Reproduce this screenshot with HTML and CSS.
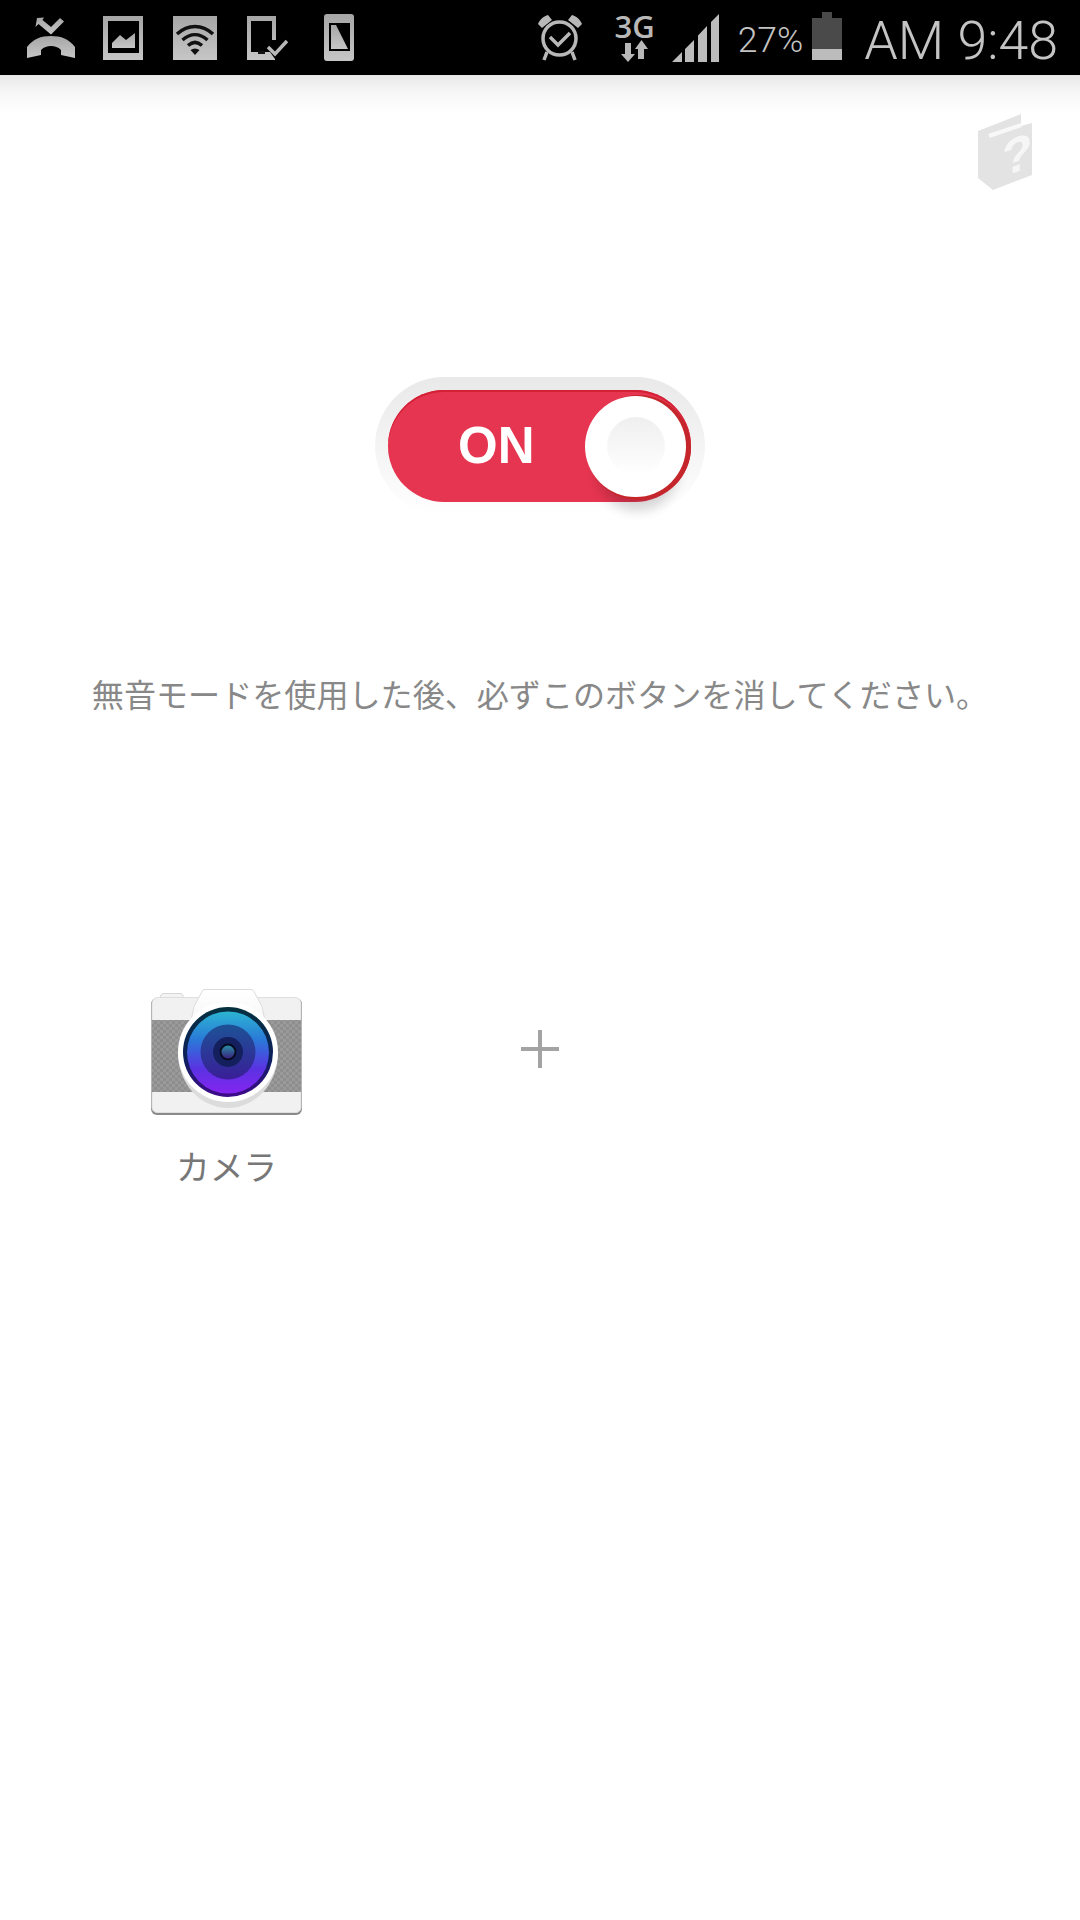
FILE: index.html
```html
<!DOCTYPE html>
<html lang="ja">
<head>
<meta charset="utf-8">
<title>無音モード</title>
<link rel="stylesheet" href="styles.css">
</head>
<body>
<header class="status">
  <div class="status-left">
    <svg class="ic" width="48" height="42" viewBox="0 0 48 42"><defs><linearGradient id="g" x1="0" y1="0" x2="0" y2="1"><stop offset="0" stop-color="#a6a6a6"/><stop offset="1" stop-color="#c6c6c6"/></linearGradient></defs>
      <path fill="url(#g)" d="M10 1l7-.5-1.500 2.500 8.500 7 9-9 4 3.500-13 13L11.500 7l-3 3z"/>
      <path fill="url(#g)" d="M0 41V30c6-8 14-11 24-11s18 3 24 11v11l-14-3v-5c-3-3-6-4-10-4s-7 1-10 4v5z"/>
    </svg>
    <svg class="ic" width="40" height="44" viewBox="0 0 40 44">
      <path fill="url(#g)" fill-rule="evenodd" d="M0 0h40v44H0zM5 5v32h31V5z"/>
      <path fill="url(#g)" d="M9 32v-5l8-8 6 5 9-7v15z"/>
    </svg>
    <svg class="ic" width="44" height="44" viewBox="0 0 44 44">
      <rect width="44" height="44" fill="url(#g)"/>
      <path fill="none" stroke="#111" stroke-width="3.500" d="M4 18c11-10 25-10 36 0M9.500 24c8-7 17-7 25 0M15 29.500c4.500-4 9.500-4 14 0"/>
      <path fill="#111" d="M17.500 34c3-2 6-2 9 0L22 39z"/>
    </svg>
    <svg class="ic" width="41" height="44" viewBox="0 0 41 44">
      <path fill="url(#g)" fill-rule="evenodd" d="M0 0h29v24h-4V5H4v31h19l5 7v1H0z"/>
      <rect x="11" y="35" width="7" height="3" fill="#111"/>
      <path fill="none" stroke="#b8b8b8" stroke-width="3.500" d="M21 31l7 7 12-13"/>
    </svg>
    <svg class="ic" width="30" height="47" viewBox="0 0 30 47">
      <path fill="url(#g)" fill-rule="evenodd" d="M3 0h24a3 3 0 0 1 3 3v41a3 3 0 0 1-3 3H3a3 3 0 0 1-3-3V3a3 3 0 0 1 3-3zM5 9v28h21V9z"/>
      <path fill="url(#g)" d="M7 11h5l12 24H7z"/>
    </svg>
  </div>
  <div class="status-right">
    <svg class="alarm" width="44" height="46" viewBox="0 0 44 46">
      <path fill="#b8b8b8" d="M0 9c2-5 6-8 10-9l4 5-10 8zM44 9c-2-5-6-8-10-9l-4 5 10 8z"/>
      <circle cx="21.500" cy="23.500" r="16.500" fill="none" stroke="#b8b8b8" stroke-width="3.500"/>
      <path fill="none" stroke="#b8b8b8" stroke-width="3.500" d="M12 22l8 8 12-12M9 37l-3 8M34 37l3 8"/>
    </svg>
    <div class="net">
      <span class="net-label">3G</span>
      <svg width="27" height="22" viewBox="0 0 27 22"><path fill="#b8b8b8" d="M4 3h6v11h4l-7 8-7-8h4zM20.500 0l6.500 9h-4v10h-6V9h-3z"/></svg>
    </div>
    <svg class="signal" width="47" height="48" viewBox="0 0 47 48">
      <path fill="#bcbcbc" d="M0 48l10-10v10zM13 48V35l9-9v22zM26 48V21.500l9-9.500v36zM39 48V8l8-8v48z"/>
    </svg>
    <span class="battery-text">27%</span>
    <div class="battery"><div class="battery-tip"></div><div class="battery-body"><div class="battery-level"></div></div></div>
    <span class="clock">AM 9:48</span>
  </div>
</header>

<main class="page">
  <div class="help-row">
    <svg class="help" width="55" height="77" viewBox="0 0 55 77">
      <path fill="#e3e3e3" d="M0 18L43 1v12l11-3v52L15 77 0 65z"/>
      <path stroke="#f8f8f8" stroke-width="4" d="M11 23l32-11"/>
      <text class="help-mark" x="24" y="73" transform="skewY(-20)">?</text>
    </svg>
  </div>

  <div class="toggle-row">
    <div class="toggle">
      <div class="toggle-track">
        <span class="toggle-label">ON</span>
        <div class="toggle-knob"><div class="toggle-dimple"></div></div>
      </div>
    </div>
  </div>

  <p class="notice">無音モードを使用した後、必ずこのボタンを消してください。</p>

  <section class="apps">
    <div class="app">
      <svg class="camera" width="152" height="127" viewBox="0 0 152 127">
        <defs>
          <linearGradient id="lens" x1="0" y1="0" x2="0" y2="1"><stop offset="0" stop-color="#2cb4d2"/><stop offset=".35" stop-color="#2a78d8"/><stop offset=".7" stop-color="#5a32e2"/><stop offset="1" stop-color="#8524f0"/></linearGradient>
          <linearGradient id="mid" x1="0" y1="0" x2="0" y2="1"><stop offset="0" stop-color="#1d5296"/><stop offset="1" stop-color="#3a1e98"/></linearGradient>
          <linearGradient id="rim" x1="0" y1="0" x2="0" y2="1"><stop offset="0" stop-color="#04303f"/><stop offset=".6" stop-color="#0d1f5e"/><stop offset="1" stop-color="#3f0a8c"/></linearGradient>
          <linearGradient id="pupil" x1="0" y1="0" x2="0" y2="1"><stop offset="0" stop-color="#2a93a8"/><stop offset="1" stop-color="#3a1a7a"/></linearGradient>
          <linearGradient id="bump" x1="0" y1="0" x2="0" y2="1"><stop offset="0" stop-color="#fff"/><stop offset="1" stop-color="#f1f1f1"/></linearGradient>
          <pattern id="mesh" width="6" height="6" patternUnits="userSpaceOnUse"><rect width="6" height="6" fill="#9a9a9a"/><rect width="3" height="3" fill="#8e8e8e"/><rect x="3" y="3" width="3" height="3" fill="#8e8e8e"/></pattern>
        </defs>
        <path fill="#f3f3f3" stroke="#d6d6d6" d="M9 10l1-3a3 3 0 0 1 2-1.500h18a3 3 0 0 1 2 2V10z"/>
        <path fill="#8a8a8a" d="M6 10h139a6 6 0 0 1 6 6v105a6 6 0 0 1-6 6H6a6 6 0 0 1-6-6V16a6 6 0 0 1 6-6z"/>
        <path fill="#f1f1f1" stroke="#dedede" d="M7 9.500h137a6 6 0 0 1 6 6v104a5 5 0 0 1-5 5H6a5 5 0 0 1-5-5v-104a6 6 0 0 1 6-6z"/>
        <rect x="1" y="32" width="149" height="72" fill="url(#mesh)"/>
        <path fill="url(#bump)" stroke="#dcdcdc" d="M53 1.500h47q2 0 3 2l8 15 8 38H35l8-38 8-15q1-2 2-2z"/>
        <path fill="#dcdcdc" d="M27 65a50 55 0 0 0 100 0z"/>
        <circle cx="77" cy="64" r="50" fill="#fff"/>
        <circle cx="77" cy="64" r="45" fill="url(#rim)"/>
        <circle cx="77" cy="64.500" r="41" fill="url(#lens)"/>
        <circle cx="77" cy="64" r="27.500" fill="url(#mid)"/>
        <circle cx="77" cy="64" r="15" fill="#14205e"/>
        <circle cx="77" cy="64" r="7.500" fill="url(#pupil)" stroke="#070b20" stroke-width="2"/>
      </svg>
      <span class="app-label">カメラ</span>
    </div>
    <div class="app">
      <svg class="plus" width="38" height="38" viewBox="0 0 38 38"><path stroke="#a3a3a3" stroke-width="4" d="M19 0v38M0 19h38"/></svg>
    </div>
  </section>
</main>
</body>
</html>
```
FILE: styles.css
```css
* { box-sizing: border-box; }
html, body { margin: 0; padding: 0; }
body {
  width: 1080px;
  height: 1920px;
  background: #fff;
  overflow: hidden;
  font-family: "Noto Sans CJK JP", "Noto Sans", sans-serif;
}
svg { display: block; flex: none; }

.status {
  height: 75px;
  background: #000;
  display: flex;
  justify-content: space-between;
  align-items: center;
  padding: 0 22px 0 27px;
}
.status-left { display: flex; align-items: center; }
.status-left .ic:nth-child(1) { margin-right: 28px; }
.status-left .ic:nth-child(2) { margin-right: 30px; }
.status-left .ic:nth-child(3) { margin-right: 30px; }
.status-left .ic:nth-child(4) { margin-right: 36px; }
.status-right { display: flex; align-items: center; height: 75px; }
.alarm { margin-right: 33px; }
.net { display: flex; flex-direction: column; align-items: center; width: 40px; margin-right: 17px; }
.net-label {
  font: 600 31px/27px "Open Sans", sans-serif;
  color: #b8b8b8;
  white-space: nowrap;
}
.signal { margin-right: 19px; }
.battery-text {
  font: 300 35.500px/40px Roboto, sans-serif;
  color: #c4c4c4;
  margin-right: 9px;
  margin-top: 5px;
}
.battery { display: flex; flex-direction: column; align-items: center; width: 30px; margin-right: 22px; margin-top: -3px; }
.battery-tip { width: 10px; height: 6px; background: #4a4a4a; }
.battery-body { width: 30px; height: 42px; background: #4a4a4a; display: flex; align-items: flex-end; }
.battery-level { width: 100%; height: 11px; background: #bcbcbc; }
.clock {
  font: 300 53.700px/60px Roboto, sans-serif;
  color: #c4c4c4;
  margin-top: 6px;
  white-space: nowrap;
}

.page {
  height: 1845px;
  background: linear-gradient(#e8e8e8, #f6f6f6 16px, #fff 38px) no-repeat;
}
.help-row { display: flex; justify-content: flex-end; padding: 38px 47px 0 0; }
.help { filter: blur(0.6px); }
.help-mark { font: 700 50px "Liberation Sans", sans-serif; fill: #f6f6f6; }

.toggle-row { display: flex; justify-content: center; margin-top: 187px; }
.toggle {
  width: 330px;
  height: 138px;
  padding: 13px;
  border-radius: 69px;
  background: linear-gradient(#e9e9e9, #f6f6f6 60%, #fff);
  filter: blur(0.7px);
}
.toggle-track {
  width: 303px;
  height: 112px;
  border-radius: 56px;
  background: #e63550;
  box-shadow: inset 0 2px 0 #d32035;
  display: flex;
  align-items: center;
  justify-content: space-between;
  padding: 0 5px 0 70px;
}
.toggle-label {
  font: 700 51px/52px "Liberation Sans", sans-serif;
  color: #fff;
}
.toggle-knob {
  width: 101px;
  height: 101px;
  border-radius: 50%;
  background: #fff;
  box-shadow: 3px 1px 0 2px #c4262b, 2px 24px 12px -10px rgba(0, 0, 0, .16);
  display: flex;
  align-items: center;
  justify-content: center;
}
.toggle-dimple {
  width: 58px;
  height: 58px;
  border-radius: 50%;
  background: linear-gradient(#efefef, #fafafa 70%, #fff);
}

.notice {
  margin: 158px 0 0;
  text-align: center;
  font-size: 32.100px;
  line-height: 40px;
  color: #888;
  white-space: nowrap;
}

.apps {
  display: grid;
  grid-template-columns: repeat(3, 313px);
  padding: 0 70px;
  margin-top: 275px;
}
.app { display: flex; flex-direction: column; align-items: center; }
.camera { filter: blur(0.5px); }
.app-label {
  margin-top: 31px;
  font-size: 33.700px;
  line-height: 40px;
  color: #777;
}
.plus { margin-top: 42px; }
```
